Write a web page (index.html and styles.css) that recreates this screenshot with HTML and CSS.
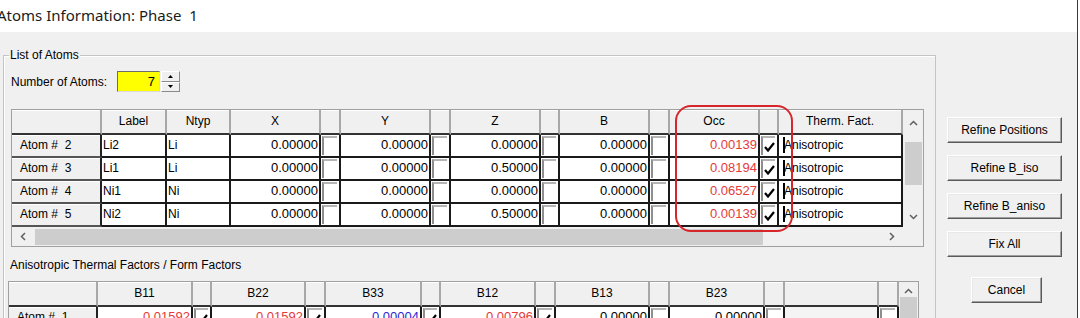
FILE: index.html
```html
<!DOCTYPE html>
<html lang="en">
<head>
    <meta charset="UTF-8">
    <title>Atoms Information: Phase 1</title>
    <link rel="stylesheet" href="styles.css">
</head>
<body>
    <div class="window">
        <div class="titlebar">Atoms Information: Phase&nbsp; 1</div>
        <div class="client">
            <fieldset class="group">
                <legend>List of Atoms</legend>
                <div class="count-row">
                    <span class="count-label">Number of Atoms:</span>
                    <div class="num-box">7</div>
                    <div class="spin">
                        <span><svg width="5" height="3"><path d="M0 3 L2.5 0 L5 3 Z" fill="#000"/></svg></span>
                        <span><svg width="5" height="3"><path d="M0 0 L2.5 3 L5 0 Z" fill="#000"/></svg></span>
                    </div>
                </div>

                <div class="frame atoms">
                    <div class="cells">
                        <div class="hd"></div>
                        <div class="hd">Label</div>
                        <div class="hd">Ntyp</div>
                        <div class="hd">X</div>
                        <div class="hd"></div>
                        <div class="hd">Y</div>
                        <div class="hd"></div>
                        <div class="hd">Z</div>
                        <div class="hd"></div>
                        <div class="hd">B</div>
                        <div class="hd"></div>
                        <div class="hd">Occ</div>
                        <div class="hd"></div>
                        <div class="hd">Therm. Fact.</div>

                        <div class="rh">Atom #&nbsp; 2</div>
                        <div class="tx">Li2</div>
                        <div class="tx">Li</div>
                        <div class="num">0.00000</div>
                        <div class="cb"><i></i></div>
                        <div class="num">0.00000</div>
                        <div class="cb"><i></i></div>
                        <div class="num">0.00000</div>
                        <div class="cb"><i></i></div>
                        <div class="num">0.00000</div>
                        <div class="cb"><i></i></div>
                        <div class="num red">0.00139</div>
                        <div class="cb"><i><svg width="11" height="10"><path d="M1 5 L4 8.5 L10 1" stroke="#000" stroke-width="2.2" fill="none"/></svg></i></div>
                        <div class="tf">Anisotropic</div>

                        <div class="rh">Atom #&nbsp; 3</div>
                        <div class="tx">Li1</div>
                        <div class="tx">Li</div>
                        <div class="num">0.00000</div>
                        <div class="cb"><i></i></div>
                        <div class="num">0.00000</div>
                        <div class="cb"><i></i></div>
                        <div class="num">0.50000</div>
                        <div class="cb"><i></i></div>
                        <div class="num">0.00000</div>
                        <div class="cb"><i></i></div>
                        <div class="num red">0.08194</div>
                        <div class="cb"><i><svg width="11" height="10"><path d="M1 5 L4 8.5 L10 1" stroke="#000" stroke-width="2.2" fill="none"/></svg></i></div>
                        <div class="tf">Anisotropic</div>

                        <div class="rh">Atom #&nbsp; 4</div>
                        <div class="tx">Ni1</div>
                        <div class="tx">Ni</div>
                        <div class="num">0.00000</div>
                        <div class="cb"><i></i></div>
                        <div class="num">0.00000</div>
                        <div class="cb"><i></i></div>
                        <div class="num">0.00000</div>
                        <div class="cb"><i></i></div>
                        <div class="num">0.00000</div>
                        <div class="cb"><i></i></div>
                        <div class="num red">0.06527</div>
                        <div class="cb"><i><svg width="11" height="10"><path d="M1 5 L4 8.5 L10 1" stroke="#000" stroke-width="2.2" fill="none"/></svg></i></div>
                        <div class="tf">Anisotropic</div>

                        <div class="rh">Atom #&nbsp; 5</div>
                        <div class="tx">Ni2</div>
                        <div class="tx">Ni</div>
                        <div class="num">0.00000</div>
                        <div class="cb"><i></i></div>
                        <div class="num">0.00000</div>
                        <div class="cb"><i></i></div>
                        <div class="num">0.50000</div>
                        <div class="cb"><i></i></div>
                        <div class="num">0.00000</div>
                        <div class="cb"><i></i></div>
                        <div class="num red">0.00139</div>
                        <div class="cb"><i><svg width="11" height="10"><path d="M1 5 L4 8.5 L10 1" stroke="#000" stroke-width="2.2" fill="none"/></svg></i></div>
                        <div class="tf">Anisotropic</div>
                    </div>
                    <div class="vscroll">
                        <span class="arrow"><svg width="9" height="6"><path d="M1 5 L4.5 1.5 L8 5" stroke="#606060" stroke-width="1.5" fill="none"/></svg></span>
                        <span class="thumb"></span>
                        <span class="arrow down"><svg width="9" height="6"><path d="M1 1 L4.5 4.5 L8 1" stroke="#606060" stroke-width="1.5" fill="none"/></svg></span>
                    </div>
                    <div class="hscroll">
                        <span class="arrow"><svg width="6" height="9"><path d="M5 1 L1.5 4.5 L5 8" stroke="#606060" stroke-width="1.5" fill="none"/></svg></span>
                        <span class="thumb"></span>
                        <span class="arrow right"><svg width="6" height="9"><path d="M1 1 L4.5 4.5 L1 8" stroke="#606060" stroke-width="1.5" fill="none"/></svg></span>
                    </div>
                    <div class="corner"></div>
                </div>

                <div class="sub-label">Anisotropic Thermal Factors / Form Factors</div>

                <div class="frame aniso">
                    <div class="cells">
                        <div class="hd"></div>
                        <div class="hd">B11</div>
                        <div class="hd"></div>
                        <div class="hd">B22</div>
                        <div class="hd"></div>
                        <div class="hd">B33</div>
                        <div class="hd"></div>
                        <div class="hd">B12</div>
                        <div class="hd"></div>
                        <div class="hd">B13</div>
                        <div class="hd"></div>
                        <div class="hd">B23</div>
                        <div class="hd"></div>
                        <div class="hd"></div>
                        <div class="hd"></div>

                        <div class="rh">Atom #&nbsp; 1</div>
                        <div class="num red">0.01592</div>
                        <div class="cb"><i><svg width="11" height="10"><path d="M1 5 L4 8.5 L10 1" stroke="#000" stroke-width="2.2" fill="none"/></svg></i></div>
                        <div class="num red">0.01592</div>
                        <div class="cb"><i><svg width="11" height="10"><path d="M1 5 L4 8.5 L10 1" stroke="#000" stroke-width="2.2" fill="none"/></svg></i></div>
                        <div class="num blue">0.00004</div>
                        <div class="cb"><i><svg width="11" height="10"><path d="M1 5 L4 8.5 L10 1" stroke="#000" stroke-width="2.2" fill="none"/></svg></i></div>
                        <div class="num red">0.00796</div>
                        <div class="cb"><i><svg width="11" height="10"><path d="M1 5 L4 8.5 L10 1" stroke="#000" stroke-width="2.2" fill="none"/></svg></i></div>
                        <div class="num">0.00000</div>
                        <div class="cb"><i></i></div>
                        <div class="num">0.00000</div>
                        <div class="cb"><i></i></div>
                        <div class="blank"></div>
                        <div class="cb"><i></i></div>
                    </div>
                    <div class="vscroll">
                        <span class="arrow"><svg width="9" height="6"><path d="M1 5 L4.5 1.5 L8 5" stroke="#606060" stroke-width="1.5" fill="none"/></svg></span>
                        <span class="thumb"></span>
                    </div>
                </div>
            </fieldset>

            <div class="buttons">
                <button>Refine Positions</button>
                <button>Refine B_iso</button>
                <button>Refine B_aniso</button>
                <button>Fix All</button>
                <button class="cancel">Cancel</button>
            </div>
        </div>

        <div class="mark"></div>
    </div>
</body>
</html>
```

FILE: styles.css
```css
* {
    box-sizing: border-box;
}
body {
    margin: 0;
    background-color: #fff;
    font-family: "Liberation Sans", Arial, sans-serif;
    font-size: 12px;
    color: #000;
    overflow: hidden;
}
.window {
    position: relative;
    width: 1078px;
    height: 318px;
    background-color: #f0f0f0;
    border-right: 1px solid #3a3a3a;
    overflow: hidden;
}
.titlebar {
    height: 32px;
    background-color: #fff;
    font-family: "Noto Sans", sans-serif;
    font-size: 15px;
    line-height: 30px;
    text-indent: -3px;
    color: #1a1a1a;
    white-space: nowrap;
}
.client {
    display: flex;
    padding-left: 3px;
}
.group {
    width: 933px;
    height: 320px;
    margin: 16px 0 0;
    padding: 9px 0 0 7px;
    border: 1px solid #c4c4c4;
    box-shadow: inset 1px 1px #fff;
    min-width: 0;
}
.group legend {
    padding: 0 1px;
    margin-left: -2px;
    line-height: 14px;
}
.count-row {
    display: flex;
    align-items: center;
    height: 21px;
}
.count-label {
    width: 106px;
}
.num-box {
    width: 43px;
    height: 21px;
    background-color: #ffff00;
    border-top: 1px solid #6d6d6d;
    border-left: 1px solid #6d6d6d;
    border-right: 1px solid #d8d8d8;
    border-bottom: 1px solid #d8d8d8;
    text-align: right;
    padding-right: 4px;
    font-size: 13px;
    line-height: 19px;
}
.spin {
    display: flex;
    flex-direction: column;
    width: 19px;
    height: 21px;
    margin-left: 1px;
}
.spin span {
    flex: 1;
    display: flex;
    align-items: center;
    justify-content: center;
    background-color: #f0f0f0;
    border-top: 1px solid #fff;
    border-left: 1px solid #fff;
    border-right: 1px solid #8a8a8a;
    border-bottom: 1px solid #8a8a8a;
}

/* grids */
.frame {
    display: grid;
    border: 1px solid #a0a0a0;
    background-color: #f0f0f0;
}
.atoms {
    width: 913px;
    margin-top: 17px;
    grid-template-columns: 891px 20px;
    grid-template-rows: 117px 19px;
}
.aniso {
    width: 911px;
    margin-left: -3px;
    margin-top: 9px;
    grid-template-columns: 890px 19px;
    grid-template-rows: 60px;
}
.cells {
    display: grid;
    align-content: start;
}
.atoms .cells {
    grid-template-columns: 90px 65px 64px 90px 20px 90px 20px 90px 19px 90px 20px 90px 19px 124px;
    grid-template-rows: 25px repeat(4, 23px);
}
.aniso .cells {
    grid-template-columns: 89px 95px 19px 94px 20px 96px 19px 95px 20px 94px 20px 95px 20px 94px 20px;
    grid-template-rows: 25px 23px;
}
.cells > div {
    border-right: 2px solid #1a1a1a;
    border-bottom: 2px solid #1a1a1a;
    background-color: #fff;
    line-height: 21px;
    white-space: nowrap;
    overflow: hidden;
}
.cells .hd {
    background-color: #f0f0f0;
    border-right: 2px solid #a8a8a8;
    border-bottom: 2px solid #333;
    box-shadow: inset 0 1px #fff;
    text-align: center;
    line-height: 23px;
}
.cells .rh {
    background-color: #f0f0f0;
    border-right: 2px solid #222;
    border-bottom: 2px solid #555;
    box-shadow: inset 0 1px #fff;
    padding-left: 8px;
    line-height: 20px;
}
.cells .tx {
    padding-left: 1px;
    line-height: 20px;
}
.cells .num {
    text-align: right;
    padding-right: 1px;
    font-size: 13px;
    line-height: 20px;
}
.cells .red {
    color: #e53a3a;
}
.cells .blue {
    color: #2a2ad6;
}
.cells .tf {
    position: relative;
    padding-left: 5px;
    line-height: 20px;
}
.cells .tf::before {
    content: "";
    position: absolute;
    left: 4px;
    top: 2px;
    width: 2px;
    height: 16px;
    background-color: #000;
}
.cells .blank {
    background-color: #f4f4f4;
}
.cells .cb {
    padding: 1px 2px 1px 1px;
}
.cb i {
    display: flex;
    align-items: center;
    justify-content: center;
    height: 100%;
    border-top: 2px solid #b4b4b4;
    border-left: 2px solid #8e8e8e;
}

/* scrollbars */
.vscroll {
    display: flex;
    flex-direction: column;
    align-items: center;
    background-color: #f0f0f0;
}
.vscroll .arrow {
    height: 25px;
    display: flex;
    align-items: center;
}
.vscroll .thumb {
    width: 17px;
    height: 43px;
    margin-top: 7px;
    background-color: #cdcdcd;
}
.vscroll .down {
    margin-top: auto;
    height: 20px;
}
.aniso .vscroll .thumb {
    margin-top: -4px;
    height: 60px;
}
.hscroll {
    display: flex;
    align-items: center;
    background-color: #f0f0f0;
}
.hscroll .arrow {
    width: 22px;
    display: flex;
    justify-content: center;
}
.hscroll .thumb {
    width: 728px;
    height: 16px;
    margin-left: 1px;
    background-color: #cdcdcd;
}
.hscroll .right {
    margin-left: auto;
}
.corner {
    background-color: #f0f0f0;
}

.sub-label {
    margin-top: 11px;
    margin-left: -1px;
    line-height: 14px;
}

/* buttons */
.buttons {
    display: flex;
    flex-direction: column;
    width: 115px;
    margin-left: 11px;
    padding-top: 85px;
    gap: 12px;
}
button {
    height: 26px;
    padding: 0;
    font-family: "Liberation Sans", Arial, sans-serif;
    font-size: 12px;
    color: #000;
    background-color: #f0f0f0;
    border-top: 1px solid #fff;
    border-left: 1px solid #fff;
    border-right: 1px solid #5a5a5a;
    border-bottom: 1px solid #5a5a5a;
    box-shadow: inset -1px -1px #a0a0a0, inset 1px 1px #e8e8e8;
}
.buttons .cancel {
    width: 71px;
    margin-top: 8px;
    margin-left: 24px;
}

.mark {
    position: absolute;
    left: 675px;
    top: 105px;
    width: 118px;
    height: 127px;
    border: 2px solid #d6262c;
    border-radius: 16px;
}
```
